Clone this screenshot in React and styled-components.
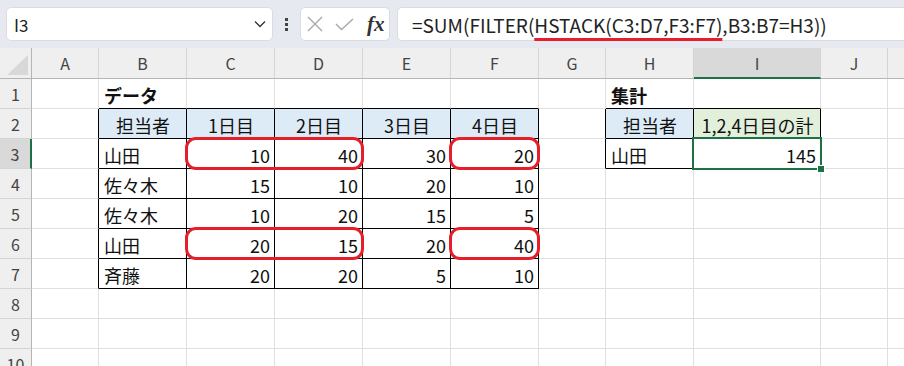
import React from 'react';
import styled, { createGlobalStyle } from 'styled-components';

const GlobalStyle = createGlobalStyle`
  html, body {
    margin: 0;
    padding: 0;
    background: #ffffff;
  }
  body {
    font-family: "Noto Sans CJK JP", "Noto Sans", sans-serif;
    overflow: hidden;
  }
`;

const Page = styled.div`
  width: 904px;
  height: 366px;
  overflow: hidden;
  display: flex;
  flex-direction: column;
`;

// formula bar
const TopBar = styled.div`
  height: 48px;
  flex: none;
  background: #e6e9ef;
  display: flex;
  align-items: center;
  padding-left: 6px;
`;

const NameBox = styled.div`
  width: 267px;
  height: 34px;
  box-sizing: border-box;
  background: #ffffff;
  border: 1px solid #d9dce2;
  border-radius: 5px;
  display: flex;
  align-items: center;
  justify-content: space-between;
  padding: 0 6px 0 7px;
  font-size: 17px;
  color: #222;
`;

const Kebab = styled.div`
  width: 27px;
  display: flex;
  flex-direction: column;
  align-items: center;
  gap: 2px;
  span {
    width: 3px;
    height: 3px;
    background: #444;
  }
`;

const FxBox = styled.div`
  width: 90px;
  height: 34px;
  box-sizing: border-box;
  background: #ffffff;
  border: 1px solid #d9dce2;
  border-radius: 5px;
  display: flex;
  align-items: center;
  padding-left: 6px;
  gap: 12px;
`;

const FxLabel = styled.span`
  font-family: "Liberation Serif", "DejaVu Serif", serif;
  font-style: italic;
  font-weight: bold;
  font-size: 21px;
  color: #333;
  line-height: 1;
  margin-left: 1px;
`;

const FormulaInput = styled.div`
  flex: 1;
  height: 34px;
  margin-left: 7px;
  box-sizing: border-box;
  background: #ffffff;
  border: 1px solid #d9dce2;
  border-right: none;
  border-radius: 5px 0 0 5px;
  display: flex;
  align-items: center;
  padding-left: 14px;
  font-size: 19px;
  color: #222;
  white-space: pre;
`;

const Mark = styled.span`
  text-decoration: underline;
  text-decoration-color: #e51e2a;
  text-decoration-thickness: 3px;
  text-underline-offset: 5px;
`;

// sheet
const Sheet = styled.div`
  display: grid;
  grid-template-columns: 32px 67px 88px 88px 88px 88px 88px 67px 88px 127px 67px 67px;
  grid-template-rows: 31px;
  grid-auto-rows: 30px;
`;

const Corner = styled.div`
  grid-column: 1;
  grid-row: 1;
  background: #efefef;
  box-sizing: border-box;
  border-right: 1px solid #b5b5b5;
  border-bottom: 1px solid #b5b5b5;
  display: flex;
  align-items: flex-end;
  justify-content: flex-end;
  padding: 0 3px 3px 0;
  &::after {
    content: '';
    width: 0;
    height: 0;
    border-left: 21px solid transparent;
    border-bottom: 20px solid #d8d8d8;
  }
`;

const ColHead = styled.div`
  grid-column: ${(p) => p.$c};
  grid-row: 1;
  background: ${(p) => (p.$selected ? '#d9d9d9' : '#efefef')};
  box-sizing: border-box;
  border-right: 1px solid #d4d4d4;
  border-bottom: ${(p) => (p.$selected ? '2px solid #1e7145' : '1px solid #b5b5b5')};
  display: flex;
  align-items: center;
  justify-content: center;
  font-size: 16px;
  color: #444;
`;

const RowHead = styled.div`
  grid-column: 1;
  grid-row: ${(p) => p.$r};
  background: ${(p) => (p.$selected ? '#d9d9d9' : '#efefef')};
  box-sizing: border-box;
  border-right: ${(p) => (p.$selected ? '2px solid #1e7145' : '1px solid #b5b5b5')};
  border-bottom: 1px solid #d4d4d4;
  display: flex;
  align-items: center;
  justify-content: center;
  font-size: 16px;
  color: #444;
`;

const Cell = styled.div`
  grid-column: ${(p) => p.$c};
  grid-row: ${(p) => p.$r};
  box-sizing: border-box;
  background: ${(p) => p.$bg || '#ffffff'};
  border-right: 1px solid ${(p) => p.$right};
  border-bottom: 1px solid ${(p) => p.$bottom};
  display: flex;
  align-items: center;
  justify-content: ${(p) => ({ left: 'flex-start', right: 'flex-end', center: 'center' }[p.$align] || 'flex-start')};
  padding: 2px 4px 0 5px;
  font-size: 18px;
  font-weight: ${(p) => (p.$bold ? 700 : 400)};
  color: #111;
  white-space: nowrap;
`;

const Oval = styled.div`
  grid-column: ${(p) => p.$c} / span ${(p) => p.$span || 1};
  grid-row: ${(p) => p.$r};
  margin: -2px -1px -1px -2px;
  border: 3px solid #e51e2a;
  border-radius: 11px;
  z-index: 2;
  pointer-events: none;
`;

const Selection = styled.div`
  grid-column: ${(p) => p.$c};
  grid-row: ${(p) => p.$r};
  margin: -2px -1px -1px -2px;
  border: 2px solid #1e7145;
  position: relative;
  z-index: 3;
  pointer-events: none;
`;

const FillHandle = styled.span`
  position: absolute;
  right: -5px;
  bottom: -5px;
  width: 6px;
  height: 6px;
  background: #1e7145;
  border: 1px solid #ffffff;
`;

const COLS = ['A', 'B', 'C', 'D', 'E', 'F', 'G', 'H', 'I', 'J', 'K'];
const ROWS = [1, 2, 3, 4, 5, 6, 7, 8, 9, 10];

const BLUE = '#ddebf7';
const GREEN = '#e2efda';

const DATA = [
  ['山田', 10, 40, 30, 20],
  ['佐々木', 15, 10, 20, 10],
  ['佐々木', 10, 20, 15, 5],
  ['山田', 20, 15, 20, 40],
  ['斉藤', 20, 20, 5, 10],
];

function buildCells() {
  const cells = {
    B1: { v: 'データ', bold: true },
    H1: { v: '集計', bold: true },
    H2: { v: '担当者', align: 'center', bg: BLUE },
    I2: { v: '1,2,4日目の計', align: 'center', bg: GREEN },
    H3: { v: '山田' },
    I3: { v: 145, align: 'right' },
  };
  ['担当者', '1日目', '2日目', '3日目', '4日目'].forEach((h, i) => {
    cells[`${COLS[i + 1]}2`] = { v: h, align: 'center', bg: BLUE };
  });
  DATA.forEach((row, r) => {
    row.forEach((v, i) => {
      cells[`${COLS[i + 1]}${r + 3}`] = { v, align: i === 0 ? 'left' : 'right' };
    });
  });
  return cells;
}

const CELLS = buildCells();

// columns are 1-based (A = 1); grid column = col + 1, grid row = row + 1
const inTable = (c, r) => (c >= 2 && c <= 6 && r >= 2 && r <= 7) || (c >= 8 && c <= 9 && r >= 2 && r <= 3);

const GRID = '#dfdfdf';

function Chevron() {
  return (
    <svg width="12" height="8" viewBox="0 0 12 8">
      <polyline points="1,1.5 6,6.5 11,1.5" fill="none" stroke="#333" strokeWidth="1.3" />
    </svg>
  );
}

function CancelIcon() {
  return (
    <svg width="16" height="16" viewBox="0 0 16 16">
      <path d="M1 1 L15 15 M15 1 L1 15" stroke="#a8a8a8" strokeWidth="1.4" fill="none" />
    </svg>
  );
}

function EnterIcon() {
  return (
    <svg width="19" height="13" viewBox="0 0 19 13">
      <polyline points="1,6 6.5,11.5 18,1" fill="none" stroke="#a8a8a8" strokeWidth="1.4" />
    </svg>
  );
}

export default function App() {
  return (
    <Page>
      <GlobalStyle />
      <TopBar>
        <NameBox>
          <span>I3</span>
          <Chevron />
        </NameBox>
        <Kebab>
          <span />
          <span />
          <span />
        </Kebab>
        <FxBox>
          <CancelIcon />
          <EnterIcon />
          <FxLabel>fx</FxLabel>
        </FxBox>
        <FormulaInput>
          {'=SUM(FILTER('}
          <Mark>HSTACK(C3:D7,F3:F7)</Mark>
          {',B3:B7=H3))'}
        </FormulaInput>
      </TopBar>

      <Sheet>
        <Corner />
        {COLS.map((c, i) => (
          <ColHead key={c} $c={i + 2} $selected={c === 'I'}>{c}</ColHead>
        ))}
        {ROWS.map((r) => (
          <React.Fragment key={r}>
            <RowHead $r={r + 1} $selected={r === 3}>{r}</RowHead>
            {COLS.map((c, i) => {
              const col = i + 1;
              const cell = CELLS[`${c}${r}`] || {};
              return (
                <Cell
                  key={c}
                  $c={col + 1}
                  $r={r + 1}
                  $align={cell.align}
                  $bg={cell.bg}
                  $bold={cell.bold}
                  $right={inTable(col, r) || inTable(col + 1, r) ? '#000' : GRID}
                  $bottom={inTable(col, r) || inTable(col, r + 1) ? '#000' : GRID}
                >
                  {cell.v}
                </Cell>
              );
            })}
          </React.Fragment>
        ))}
        <Oval $c={4} $span={2} $r={4} />
        <Oval $c={7} $r={4} />
        <Oval $c={4} $span={2} $r={7} />
        <Oval $c={7} $r={7} />
        <Selection $c={10} $r={4}>
          <FillHandle />
        </Selection>
      </Sheet>
    </Page>
  );
}
